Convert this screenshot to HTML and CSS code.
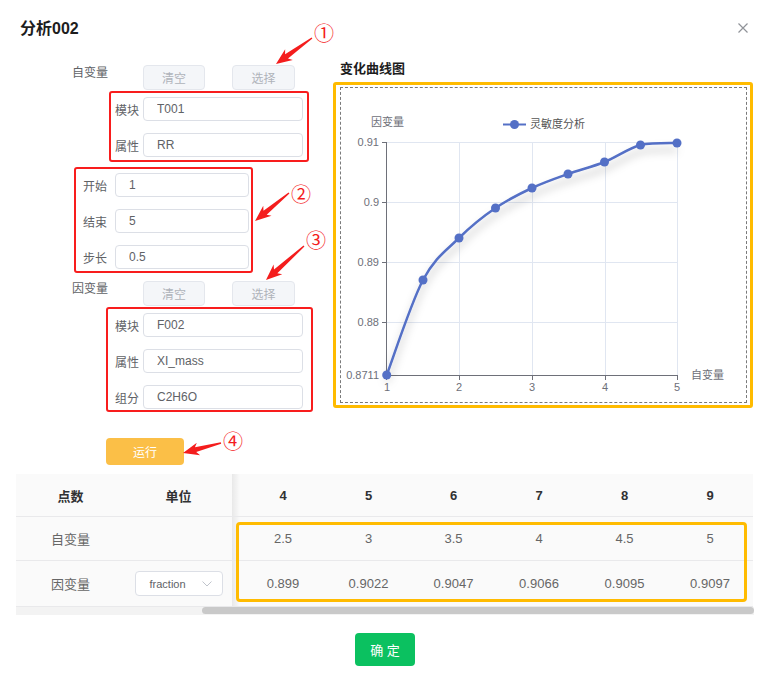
FILE: index.html
```html
<!DOCTYPE html>
<html>
<head>
<meta charset="utf-8">
<link rel="stylesheet" href="styles.css">
</head>
<body>
<div class="dialog">
  <div class="dialog-header">
    <h2 class="dialog-title">分析002</h2>
    <svg class="dialog-close" width="10" height="10" viewBox="0 0 10 10"><path d="M0.5 0.5 L9.5 9.5 M9.5 0.5 L0.5 9.5" stroke="#909399" stroke-width="1.2"/></svg>
  </div>

  <div class="setup">
    <div class="form-col">
      <div class="var-row">
        <span class="var-label">自变量</span>
        <button class="pick-btn">清空</button>
        <button class="pick-btn pick-second">选择</button>
      </div>
      <div class="mark-box box-x">
        <div class="field"><span class="field-label">模块</span><input class="field-input" type="text" value="T001"></div>
        <div class="field"><span class="field-label">属性</span><input class="field-input" type="text" value="RR"></div>
      </div>
      <div class="mark-box box-range">
        <div class="field"><span class="field-label">开始</span><input class="field-input" type="text" value="1"></div>
        <div class="field"><span class="field-label">结束</span><input class="field-input" type="text" value="5"></div>
        <div class="field"><span class="field-label">步长</span><input class="field-input" type="text" value="0.5"></div>
      </div>
      <div class="var-row var-row-y">
        <span class="var-label">因变量</span>
        <button class="pick-btn">清空</button>
        <button class="pick-btn pick-second">选择</button>
      </div>
      <div class="mark-box box-y">
        <div class="field"><span class="field-label">模块</span><input class="field-input" type="text" value="F002"></div>
        <div class="field"><span class="field-label">属性</span><input class="field-input" type="text" value="XI_mass"></div>
        <div class="field"><span class="field-label">组分</span><input class="field-input" type="text" value="C2H6O"></div>
      </div>
      <button class="btn-run">运行</button>
    </div>

    <div class="chart-col">
      <div class="chart-title">变化曲线图</div>
      <div class="chart-frame">
        <div class="chart-inner">
          <svg class="chart-svg" width="405" height="314" viewBox="341 88 405 314">
            <defs>
              <filter id="lineShadow" x="-10%" y="-20%" width="120%" height="160%">
                <feDropShadow dx="0" dy="7" stdDeviation="4" flood-color="#000" flood-opacity="0.28"/>
              </filter>
            </defs>
            <g stroke="#e0e6f1" stroke-width="1">
              <line x1="387" y1="142.5" x2="677" y2="142.5"/>
              <line x1="387" y1="202.5" x2="677" y2="202.5"/>
              <line x1="387" y1="262.5" x2="677" y2="262.5"/>
              <line x1="387" y1="322.5" x2="677" y2="322.5"/>
              <line x1="459.5" y1="142" x2="459.5" y2="375"/>
              <line x1="532.5" y1="142" x2="532.5" y2="375"/>
              <line x1="605.5" y1="142" x2="605.5" y2="375"/>
              <line x1="677.5" y1="142" x2="677.5" y2="375"/>
            </g>
            <g stroke="#6e7079" stroke-width="1">
              <line x1="386.5" y1="142" x2="386.5" y2="375.5"/>
              <line x1="386" y1="375.5" x2="678" y2="375.5"/>
              <line x1="382" y1="142.5" x2="386" y2="142.5"/>
              <line x1="382" y1="202.5" x2="386" y2="202.5"/>
              <line x1="382" y1="262.5" x2="386" y2="262.5"/>
              <line x1="382" y1="322.5" x2="386" y2="322.5"/>
              <line x1="386.5" y1="375" x2="386.5" y2="380"/>
              <line x1="459.5" y1="375" x2="459.5" y2="380"/>
              <line x1="532.5" y1="375" x2="532.5" y2="380"/>
              <line x1="605.5" y1="375" x2="605.5" y2="380"/>
              <line x1="677.5" y1="375" x2="677.5" y2="380"/>
            </g>
            <g class="axis-text" text-anchor="end">
              <text x="379" y="146">0.91</text>
              <text x="379" y="206">0.9</text>
              <text x="379" y="266">0.89</text>
              <text x="379" y="326">0.88</text>
              <text x="379" y="379">0.8711</text>
            </g>
            <g class="axis-text" text-anchor="middle">
              <text x="387" y="391">1</text>
              <text x="459" y="391">2</text>
              <text x="532" y="391">3</text>
              <text x="605" y="391">4</text>
              <text x="677" y="391">5</text>
            </g>
            <text class="axis-text" x="371" y="126">因变量</text>
            <text class="axis-text" x="691" y="379">自变量</text>
            <line x1="503" y1="124.5" x2="526" y2="124.5" stroke="#5470c6" stroke-width="2"/>
            <circle cx="514.5" cy="124.5" r="4.5" fill="#5470c6"/>
            <text class="legend-text" x="530" y="128">灵敏度分析</text>
            <path filter="url(#lineShadow)" fill="none" stroke="#5470c6" stroke-width="2.5" stroke-linejoin="round"
              d="M386.7 375 C392.7 359.2 411 302.8 423 280 C435.1 257.2 446.9 250 459 238 C471.1 226 483.3 216.3 495.5 208 C507.7 199.7 519.9 193.7 532 188 C544.1 182.3 555.9 178.3 568 174 C580.1 169.7 592.4 166.8 604.5 162 C616.6 157.2 628.4 148.2 640.5 145 C652.6 142.6 670.9 143.3 677 143"/>
            <g fill="#5470c6">
              <circle cx="386.7" cy="375" r="4.5"/>
              <circle cx="423" cy="280" r="4.5"/>
              <circle cx="459" cy="238" r="4.5"/>
              <circle cx="495.5" cy="208" r="4.5"/>
              <circle cx="532" cy="188" r="4.5"/>
              <circle cx="568" cy="174" r="4.5"/>
              <circle cx="604.5" cy="162" r="4.5"/>
              <circle cx="640.5" cy="145" r="4.5"/>
              <circle cx="677" cy="143" r="4.5"/>
            </g>
          </svg>
        </div>
      </div>
    </div>
  </div>

  <div class="table-wrap">
    <table class="data-table">
      <colgroup>
        <col class="c-name"><col class="c-unit"><col class="c-edge">
        <col class="c-86"><col class="c-85"><col class="c-85"><col class="c-86"><col class="c-85"><col class="c-86">
      </colgroup>
      <thead>
        <tr><th>点数</th><th>单位</th><th class="edge"></th><th>4</th><th>5</th><th>6</th><th>7</th><th>8</th><th>9</th></tr>
      </thead>
      <tbody>
        <tr class="row-x"><td>自变量</td><td></td><td class="edge"></td><td>2.5</td><td>3</td><td>3.5</td><td>4</td><td>4.5</td><td>5</td></tr>
        <tr class="row-y">
          <td>因变量</td>
          <td><div class="unit-select"><span>fraction</span><svg width="10" height="6" viewBox="0 0 10 6"><path d="M0.5 0.5 L5 5 L9.5 0.5" fill="none" stroke="#c0c4cc" stroke-width="1"/></svg></div></td>
          <td class="edge"></td><td>0.899</td><td>0.9022</td><td>0.9047</td><td>0.9066</td><td>0.9095</td><td>0.9097</td>
        </tr>
      </tbody>
    </table>
    <div class="scroll-track"><div class="scroll-thumb"></div></div>
    <div class="mark-table"></div>
  </div>

  <div class="dialog-footer">
    <button class="btn-ok">确 定</button>
  </div>

  <svg class="annotations" width="770" height="686" viewBox="0 0 770 686">
    <g fill="#f41d1d">
      <polygon transform="translate(312 38) rotate(144.2)" points="0,-0.7 31.4,-2.5 28.4,-6.5 44.4,0 28.4,6.5 31.4,2.5 0,0.7"/>
      <polygon transform="translate(289 193) rotate(140.5)" points="0,-0.7 31,-2.5 28,-6.5 44,0 28,6.5 31,2.5 0,0.7"/>
      <polygon transform="translate(304 246) rotate(138.2)" points="0,-0.7 38,-2.5 35,-6.5 51,0 35,6.5 38,2.5 0,0.7"/>
      <polygon transform="translate(221 443) rotate(165.3)" points="0,-0.7 26.3,-2.5 23.3,-6.5 39.3,0 23.3,6.5 26.3,2.5 0,0.7"/>
    </g>
    <g class="mark-num" text-anchor="middle">
      <text x="324" y="41">①</text>
      <text x="301" y="202">②</text>
      <text x="316" y="248">③</text>
      <text x="233" y="449">④</text>
    </g>
  </svg>
</div>
</body>
</html>
```

FILE: styles.css
```css
*{
	box-sizing: border-box;
}
body{
	margin: 0;
	font-family: "Liberation Sans", "Noto Sans CJK SC", sans-serif;
	color: #303133;
	background: #fff;
}
.dialog{
	position: relative;
	width: 770px;
	height: 686px;
}
.dialog-header{
	display: flex;
	justify-content: space-between;
	align-items: center;
	height: 41px;
	padding: 17px 22px 0 20px;
}
.dialog-title{
	margin: 0;
	font-size: 16px;
	line-height: 24px;
	font-weight: bold;
	color: #1d1d1d;
}
.dialog-close{
	margin-top: -2px;
}

/* form + chart */
.setup{
	display: flex;
}
.form-col{
	width: 333px;
	padding-top: 24px;
}
.var-row{
	display: flex;
	align-items: flex-start;
	height: 25px;
	padding-left: 72px;
}
.var-row-y{
	margin-top: 8px;
}
.var-label{
	width: 71px;
	font-size: 12px;
	line-height: 16px;
	color: #606266;
}
.pick-btn{
	width: 62px;
	height: 25px;
	padding: 0;
	border: 1px solid #e4e7ed;
	border-radius: 4px;
	background: #f4f6f9;
	color: #afb3ba;
	font: 12px "Liberation Sans", "Noto Sans CJK SC", sans-serif;
}
.pick-second{
	margin-left: 27px;
	width: 63px;
}
.mark-box{
	display: flex;
	flex-direction: column;
	gap: 12px;
	border: 2px solid #f81d1d;
	border-radius: 3px;
}
.box-x{
	width: 200px;
	margin: 1px 0 0 109px;
	padding: 4px 4px 3px 4px;
}
.box-range{
	width: 179px;
	margin: 5px 0 0 74px;
	padding: 4px 2px 2px 7px;
}
.box-y{
	width: 207px;
	margin: 1px 0 0 106px;
	padding: 4px 8px 1px 7px;
}
.field{
	display: flex;
	align-items: center;
	height: 24px;
}
.field-label{
	width: 28px;
	font-size: 12px;
	color: #606266;
}
.box-range .field-label{
	width: 32px;
}
.field-input{
	flex: 1;
	min-width: 0;
	height: 24px;
	padding: 0 13px;
	border: 1px solid #dcdfe6;
	border-radius: 4px;
	color: #606266;
	font: 12px "Liberation Sans", "Noto Sans CJK SC", sans-serif;
	outline: none;
}
.btn-run{
	display: block;
	width: 78px;
	height: 27px;
	margin: 26px 0 0 106px;
	border: none;
	border-radius: 4px;
	background: #fbbf47;
	color: #fff;
	font: 12px "Liberation Sans", "Noto Sans CJK SC", sans-serif;
}
.chart-col{
	width: 420px;
}
.chart-title{
	margin: 19px 0 0 7px;
	font-size: 13px;
	line-height: 18px;
	font-weight: bold;
	color: #1d1d1d;
}
.chart-frame{
	height: 326px;
	margin-top: 4px;
	padding: 2px 3px 2px 4px;
	border: 3px solid #ffbb00;
	border-radius: 3px;
}
.chart-inner{
	height: 100%;
	border: 1px dashed #7a7a7a;
}
.chart-svg{
	display: block;
}
.axis-text{
	font-size: 11px;
	fill: #6e7079;
}
.legend-text{
	font-size: 11px;
	fill: #555;
}

/* table */
.table-wrap{
	position: relative;
	margin: 9px 16px 0;
}
.data-table{
	width: 737px;
	table-layout: fixed;
	border-collapse: separate;
	border-spacing: 0;
	background: #fafafa;
	font-size: 13px;
}
.c-name{ width: 109px; }
.c-unit{ width: 107px; }
.c-edge{ width: 8px; }
.c-85{ width: 85px; }
.c-86{ width: 86px; }
.data-table th,
.data-table td{
	padding: 0;
	text-align: center;
	border-bottom: 1px solid #e9e9eb;
	box-sizing: border-box;
}
.data-table th{
	height: 43px;
	color: #303133;
	font-weight: bold;
}
.data-table td{
	color: #666;
}
.row-x td{
	height: 44px;
}
.row-y td{
	height: 46px;
}
.data-table .edge{
	background: linear-gradient(to right, rgba(0,0,0,0.07), rgba(0,0,0,0));
}
.unit-select{
	display: flex;
	align-items: center;
	justify-content: space-between;
	width: 88px;
	height: 25px;
	margin: 0 auto;
	padding: 0 10px 0 14px;
	border: 1px solid #dcdfe6;
	border-radius: 4px;
	background: #fff;
	color: #606266;
	font-size: 11px;
}
.scroll-track{
	height: 8px;
	background: #f3f3f3;
}
.scroll-thumb{
	height: 7px;
	margin-left: 186px;
	border-radius: 4px;
	background: #c9c9c9;
}
.mark-table{
	position: absolute;
	left: 220px;
	top: 48px;
	width: 511px;
	height: 80px;
	border: 3px solid #ffbb00;
	border-radius: 4px;
}

/* footer */
.dialog-footer{
	display: flex;
	justify-content: center;
	margin-top: 18px;
}
.btn-ok{
	width: 60px;
	height: 33px;
	border: none;
	border-radius: 4px;
	background: #0bc160;
	color: #fff;
	font: 13px "Liberation Sans", "Noto Sans CJK SC", sans-serif;
}

/* annotation overlay */
.annotations{
	position: absolute;
	left: 0;
	top: 0;
	pointer-events: none;
}
.mark-num{
	font-family: "Noto Sans CJK SC", sans-serif;
	font-size: 20px;
	fill: #f41d1d;
}
```
